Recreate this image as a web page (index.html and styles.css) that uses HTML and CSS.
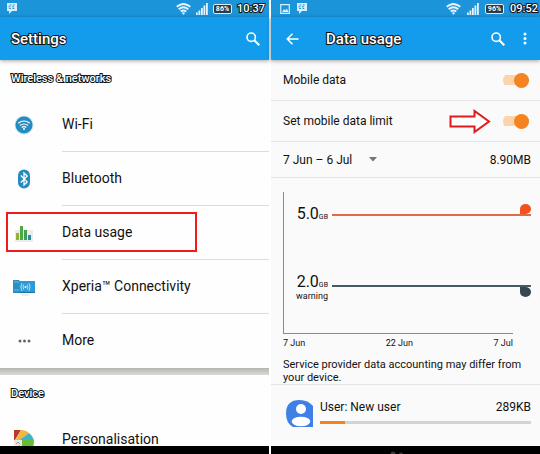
FILE: index.html
```html
<!DOCTYPE html>
<html lang="en">

<head>
    <meta charset="UTF-8">
    <meta name="viewport" content="width=device-width, initial-scale=1.0">
    <title>Settings - Data usage</title>
    <link rel="stylesheet" href="styles.css">
</head>

<body>
    <main class="screens">
        <!-- Settings list -->
        <section class="screen">
            <div class="status-bar">
                <svg class="notif" width="12" height="11" viewBox="0 0 12 11">
                    <path d="M1 0h10v8H6L3 11V8H1z" fill="#d9eefb" />
                    <path d="M3.500 2h1.800M3.200 5.500h1.800M6.800 2h1.800M6.500 5.500h1.800M2.500 3.800h2M6 3.800h2" stroke="#1c93d8" stroke-width="1" />
                </svg>
                <svg class="wifi" width="15" height="12" viewBox="0 0 15 12">
                    <path d="M.7 3.700Q7.500-1.800 14.300 3.700M2.700 6.200q4.800-3.700 9.600 0M4.700 8.500q2.800-2 5.600 0" fill="none" stroke="#e6f5fd" stroke-width="1.900" />
                    <path d="M5.800 9.800q1.700-1 3.400 0L7.500 12z" fill="#e6f5fd" />
                </svg>
                <svg class="signal" width="12" height="12" viewBox="0 0 12 12">
                    <path d="M0 12V9.500h1.800V12zM2.500 12V7.500h1.800V12zM5 12V5h1.800v7zM7.500 12V2.500h1.800V12zM10 12V0h1.800v12z" fill="#e6f5fd" />
                </svg>
                <span class="battery">86%</span>
                <span class="clock">10:37</span>
            </div>
            <header class="app-bar">
                <h1>Settings</h1>
                <button class="icon-btn" aria-label="Search">
                    <svg width="14" height="14" viewBox="0 0 14 14" fill="none" stroke="#fff" stroke-width="1.600">
                        <circle cx="5.200" cy="5.200" r="4.200" />
                        <path d="M8.300 8.300l5 5" stroke-width="2" />
                    </svg>
                </button>
            </header>
            <div class="content list">
                <h2>Wireless &amp; networks</h2>
                <ul>
                    <li>
                        <a href="#wifi">
                            <svg width="20" height="20" viewBox="0 0 20 20">
                                <circle cx="10" cy="10" r="9.500" fill="#c5e9f8" />
                                <circle cx="10" cy="10" r="8.500" fill="#278bbd" />
                                <path d="M4.300 8.300q5.700-4.600 11.400 0M6 10.500q4-3 8 0M7.700 12.500q2.300-1.600 4.600 0" fill="none" stroke="#fff" stroke-width="1.200" />
                                <circle cx="10" cy="14" r="1" fill="#fff" />
                            </svg>
                            <span>Wi-Fi</span>
                        </a>
                    </li>
                    <li>
                        <a href="#bluetooth">
                            <svg width="14" height="20" viewBox="0 0 14 20">
                                <rect x="1" y=".5" width="12" height="19" rx="6" fill="#278bbd" />
                                <path d="M3.800 6.500l6.400 6.400L7 16V4l3.200 3.100-6.400 6.400" fill="none" stroke="#fff" stroke-width="1.300" />
                            </svg>
                            <span>Bluetooth</span>
                        </a>
                    </li>
                    <li class="highlight">
                        <a href="#data-usage">
                            <svg width="20" height="18" viewBox="0 0 20 18">
                                <rect x="1" y="6" width="18" height="12" rx="1" fill="#ececec" />
                                <path d="M2 9h3v7H2z" fill="#8fb436" />
                                <path d="M6 2h3v14H6z" fill="#4fa83f" />
                                <path d="M10 6h3v10h-3z" fill="#3f9f5c" />
                                <path d="M14 11h3v5h-3z" fill="#2f8d9b" />
                            </svg>
                            <span>Data usage</span>
                        </a>
                    </li>
                    <li>
                        <a href="#xperia">
                            <svg width="22" height="17" viewBox="0 0 22 17">
                                <path d="M0 1h6l1 1v12H0z" fill="#2b8fc4" />
                                <path d="M1 3h5M1 11h5" stroke="#63bfe6" />
                                <path d="M6 2h16v12H6z" fill="#2c9bd4" />
                                <path d="M6 13h16v1H6z" fill="#1c6f9f" />
                                <path d="M8 16h8" stroke="#d5dade" />
                                <circle cx="12.500" cy="8" r="1" fill="#fff" />
                                <path d="M10.800 5.500q-1.600 2.500 0 5M14.200 5.500q1.600 2.500 0 5M9 4.200q-2.200 3.800 0 7.600M16 4.200q2.200 3.800 0 7.600" fill="none" stroke="#d4effb" stroke-width=".8" />
                            </svg>
                            <span>Xperia™ Connectivity</span>
                        </a>
                    </li>
                    <li>
                        <a href="#more">
                            <svg width="13" height="4" viewBox="0 0 13 4" fill="#666">
                                <circle cx="2" cy="2" r="1.500" />
                                <circle cx="6.500" cy="2" r="1.500" />
                                <circle cx="11" cy="2" r="1.500" />
                            </svg>
                            <span>More</span>
                        </a>
                    </li>
                </ul>
                <div class="band"></div>
                <h2>Device</h2>
                <ul>
                    <li>
                        <a href="#personalisation">
                            <svg width="20" height="20" viewBox="0 0 20 20">
                                <path d="M0 0h7L1 10H0z" fill="#b93a2b" />
                                <path d="M7 0q5 0 8 3L4 11H1z" fill="#efb73b" />
                                <path d="M15 3q4 3 5 8H4z" fill="#3fb3c6" />
                                <path d="M8 10h12q0 6-2 10H8z" fill="#66bd3b" />
                                <path d="M0 10h8v10H0z" fill="#e9eae6" />
                                <path d="M2 14l2-2 2 2M2 17h1M5 16h1" fill="none" stroke="#999" />
                            </svg>
                            <span>Personalisation</span>
                        </a>
                    </li>
                </ul>
            </div>
            <div class="nav-bar"></div>
        </section>

        <!-- Data usage -->
        <section class="screen usage">
            <div class="status-bar">
                <svg class="notif" width="10" height="10" viewBox="0 0 10 10">
                    <path d="M.7.700h8.600v8.600H.7z" fill="none" stroke="#d9eefb" stroke-width="1.200" />
                    <path d="M2 8l2-3 1.300 1.500L6.800 4.500 8.500 8z" fill="#d9eefb" />
                </svg>
                <svg class="notif" width="12" height="11" viewBox="0 0 12 11">
                    <path d="M1 0h10v8H6L3 11V8H1z" fill="#d9eefb" />
                    <path d="M3.500 2h1.800M3.200 5.500h1.800M6.800 2h1.800M6.500 5.500h1.800M2.500 3.800h2M6 3.800h2" stroke="#1c93d8" stroke-width="1" />
                </svg>
                <svg class="wifi" width="15" height="12" viewBox="0 0 15 12">
                    <path d="M.7 3.700Q7.500-1.800 14.300 3.700M2.700 6.200q4.800-3.700 9.600 0M4.700 8.500q2.800-2 5.600 0" fill="none" stroke="#e6f5fd" stroke-width="1.900" />
                    <path d="M5.800 9.800q1.700-1 3.400 0L7.500 12z" fill="#e6f5fd" />
                </svg>
                <svg class="signal" width="12" height="12" viewBox="0 0 12 12">
                    <path d="M0 12V9.500h1.800V12zM2.500 12V7.500h1.800V12zM5 12V5h1.800v7zM7.500 12V2.500h1.800V12zM10 12V0h1.800v12z" fill="#e6f5fd" />
                </svg>
                <span class="battery">96%</span>
                <span class="clock">09:52</span>
            </div>
            <header class="app-bar">
                <button class="icon-btn back" aria-label="Back">
                    <svg width="13" height="12" viewBox="0 0 13 12" fill="none" stroke="#fff" stroke-width="1.500">
                        <path d="M6.500.7L1.200 6l5.300 5.300M1.200 6h11.300" />
                    </svg>
                </button>
                <h1>Data usage</h1>
                <button class="icon-btn" aria-label="Search">
                    <svg width="14" height="14" viewBox="0 0 14 14" fill="none" stroke="#fff" stroke-width="1.600">
                        <circle cx="5.200" cy="5.200" r="4.200" />
                        <path d="M8.300 8.300l5 5" stroke-width="2" />
                    </svg>
                </button>
                <button class="icon-btn menu" aria-label="More options">
                    <svg width="4" height="13" viewBox="0 0 4 13" fill="#fff">
                        <circle cx="2" cy="2" r="1.500" />
                        <circle cx="2" cy="6.500" r="1.500" />
                        <circle cx="2" cy="11" r="1.500" />
                    </svg>
                </button>
            </header>
            <div class="content">
                <div class="option">
                    <label for="mobileData">Mobile data</label>
                    <input type="checkbox" class="switch" id="mobileData" checked>
                </div>
                <div class="option">
                    <label for="dataLimit">Set mobile data limit</label>
                    <svg class="arrow" width="42" height="25" viewBox="0 0 42 25">
                        <path d="M1.500 7.500h24V2L40 12.500 25.500 23v-5.500h-24z" fill="#fff" stroke="#e01b1b" stroke-width="2" />
                    </svg>
                    <input type="checkbox" class="switch" id="dataLimit" checked>
                </div>
                <div class="period">
                    <select id="cycle" aria-label="Data usage cycle">
                        <option>7 Jun – 6 Jul</option>
                    </select>
                    <svg width="8" height="5" viewBox="0 0 8 5">
                        <path d="M0 0h8L4 4.500z" fill="#757575" />
                    </svg>
                    <span class="total">8.90MB</span>
                </div>

                <div class="chart">
                    <div class="plot">
                        <div class="series limit">
                            <div class="label">5.0<small>GB</small></div>
                            <div class="track">
                                <span class="marker"></span>
                                <span class="line"></span>
                            </div>
                        </div>
                        <div class="series warning">
                            <div class="label">2.0<small>GB</small><em>warning</em></div>
                            <div class="track">
                                <span class="line"></span>
                                <span class="marker"></span>
                            </div>
                        </div>
                    </div>
                    <div class="x-axis">
                        <span>7 Jun</span>
                        <span>22 Jun</span>
                        <span>7 Jul</span>
                    </div>
                </div>

                <p class="note">Service provider data accounting may differ from your device.</p>

                <div class="user">
                    <svg width="27" height="27" viewBox="0 0 27 27">
                        <path d="M13.500 0Q22 0 27 6v21H7Q0 23 0 13.500 0 0 13.500 0z" fill="#3f7fe8" />
                        <circle cx="15" cy="9" r="5" fill="#fff" />
                        <ellipse cx="15" cy="21.500" rx="9.300" ry="4.800" fill="#fff" />
                    </svg>
                    <div class="user-info">
                        <div class="user-row">
                            <span>User: New user</span>
                            <span>289KB</span>
                        </div>
                        <div class="bar"><div class="fill" style="width: 12%"></div></div>
                    </div>
                </div>
            </div>
            <div class="nav-bar">
                <svg width="16" height="3" viewBox="0 0 16 3" fill="#3a3a3a">
                    <circle cx="4" cy="3" r="2.500" />
                    <circle cx="12" cy="3.500" r="2" />
                </svg>
            </div>
        </section>
    </main>
</body>

</html>
```
FILE: styles.css
```css
* {
    margin: 0;
    padding: 0;
    box-sizing: border-box;
}

body {
    font-family: Roboto, Arial, sans-serif;
    font-size: 14px;
    color: #111;
    background-color: #fff;
}

button {
    background: none;
    border: none;
    cursor: pointer;
}

svg {
    display: block;
    flex: none;
}

a {
    color: inherit;
    text-decoration: none;
}

ul {
    padding-top: 1px;
    list-style: none;
}

.screens {
    display: grid;
    grid-template-columns: 1fr 1fr;
    gap: 2px;
    height: 100vh;
}

.screen {
    display: flex;
    flex-direction: column;
    min-width: 0;
    min-height: 0;
    background-color: #fefefe;
}

.usage {
    background-color: #fafafa;
}

/* Status bar */
.status-bar {
    display: flex;
    align-items: center;
    gap: 5px;
    height: 17px;
    padding: 0 4px 0 6px;
    background-color: #1b94da;
    color: #fff;
}

.usage .status-bar {
    padding: 0 2px 0 9px;
    gap: 6px;
}

.wifi {
    margin-left: auto;
}

.battery {
    padding: 0 2px;
    border: 1px solid #d9eefb;
    border-radius: 2px;
    background-color: #2b3a44;
    font-size: 7px;
    font-weight: 700;
    line-height: 8px;
}

.clock {
    font-size: 11px;
    font-weight: 500;
}

.clock,
h1,
h2 {
    color: #fff;
    -webkit-text-stroke: 2px #111;
    paint-order: stroke fill;
}

/* App bar */
.app-bar {
    position: relative;
    display: flex;
    align-items: center;
    gap: 18px;
    height: 43px;
    padding: 0 9px 0 11px;
    background-color: #129ceb;
    box-shadow: 0 1px 4px rgba(0, 0, 0, 0.35);
}

.usage .app-bar {
    padding: 0 13px 0 15px;
}

h1 {
    flex: 1;
    font-size: 15px;
    font-weight: 500;
}

.back {
    margin-right: 9px;
}

.content {
    flex: 1;
    min-height: 0;
    overflow: hidden;
}

.nav-bar {
    display: flex;
    align-items: flex-end;
    justify-content: center;
    height: 8px;
    padding-right: 18px;
    background-color: #000;
}

/* Settings list */
h2 {
    padding: 0 11px;
    font-size: 11px;
    font-weight: 500;
    line-height: 37px;
}

.list li {
    position: relative;
}

.list a {
    display: grid;
    grid-template-columns: 48px 1fr;
    gap: 14px;
    align-items: center;
    height: 54px;
}

.list a svg {
    justify-self: center;
}

.list a span {
    line-height: 53px;
    border-bottom: 1px solid #dcdcdc;
}

.list li:last-child span {
    border-bottom-color: transparent;
}

.highlight::after {
    content: "";
    position: absolute;
    top: 6px;
    left: 6px;
    width: 191px;
    height: 40px;
    box-sizing: border-box;
    border: 2px solid #ee1c1c;
    pointer-events: none;
}

.band {
    height: 7px;
    background: linear-gradient(#b5b5b1, #d9d9d5);
}

/* Data usage options */
.option,
.period {
    display: flex;
    align-items: center;
    height: 41px;
    padding: 0 11px 0 12px;
    border-bottom: 1px solid #e4e4e4;
    font-size: 12px;
}

.option label {
    flex: 1;
}

.arrow {
    margin-right: 12px;
}

.switch {
    appearance: none;
    display: flex;
    align-items: center;
    justify-content: flex-end;
    width: 26px;
    height: 15px;
    border-radius: 8px;
    background: linear-gradient(#fcd3ab, #fcd3ab) center / 100% 10px no-repeat;
    cursor: pointer;
}

.switch::before {
    content: "";
    width: 15px;
    height: 15px;
    border-radius: 50%;
    background-color: #f5831f;
}

.switch:not(:checked) {
    justify-content: flex-start;
}

.period {
    height: 36px;
    padding-right: 9px;
}

.period select {
    appearance: none;
    width: 86px;
    border: none;
    background: none;
    color: inherit;
    font: inherit;
}

.total {
    margin-left: auto;
}

/* Chart */
.chart {
    padding: 14px 9px 0 12px;
}

.plot {
    height: 141px;
    padding-top: 12px;
    border-left: 1px solid #8a8a8a;
}

.series {
    display: flex;
    align-items: flex-start;
    gap: 4px;
    height: 71px;
}

.label {
    width: 44px;
    font-size: 16px;
    line-height: 20px;
    text-align: right;
}

.label small {
    font-size: 7px;
}

.label em {
    display: block;
    font-size: 9px;
    font-style: normal;
    line-height: 8px;
}

.track {
    flex: 1;
    display: flex;
    flex-direction: column;
    align-items: flex-end;
}

.line {
    width: 100%;
    height: 2px;
    background-color: #df6c45;
}

.marker {
    width: 11px;
    height: 10px;
    border-radius: 50% 50% 50% 0;
    background-color: #f4511e;
}

.warning .label {
    line-height: 14px;
}

.warning .track {
    padding-top: 10px;
}

.warning .line {
    background-color: #455a64;
}

.warning .marker {
    border-radius: 0 50% 50% 50%;
    background-color: #37474f;
}

.x-axis {
    display: flex;
    justify-content: space-between;
    margin-right: 18px;
    border-top: 1px solid #8a8a8a;
    font-size: 9px;
    line-height: 18px;
}

.note {
    padding: 6px 18px 0 12px;
    font-size: 11px;
    line-height: 13px;
}

/* App usage row */
.user {
    display: flex;
    gap: 7px;
    padding: 15px 9px 0 15px;
    border-top: 1px solid #e4e4e4;
}

.user-info {
    flex: 1;
}

.user-row {
    display: flex;
    justify-content: space-between;
    font-size: 12px;
    line-height: 14px;
}

.bar {
    height: 3px;
    margin-top: 7px;
    background-color: #cfd4da;
}

.fill {
    height: 100%;
    background-color: #f5831f;
}
```
